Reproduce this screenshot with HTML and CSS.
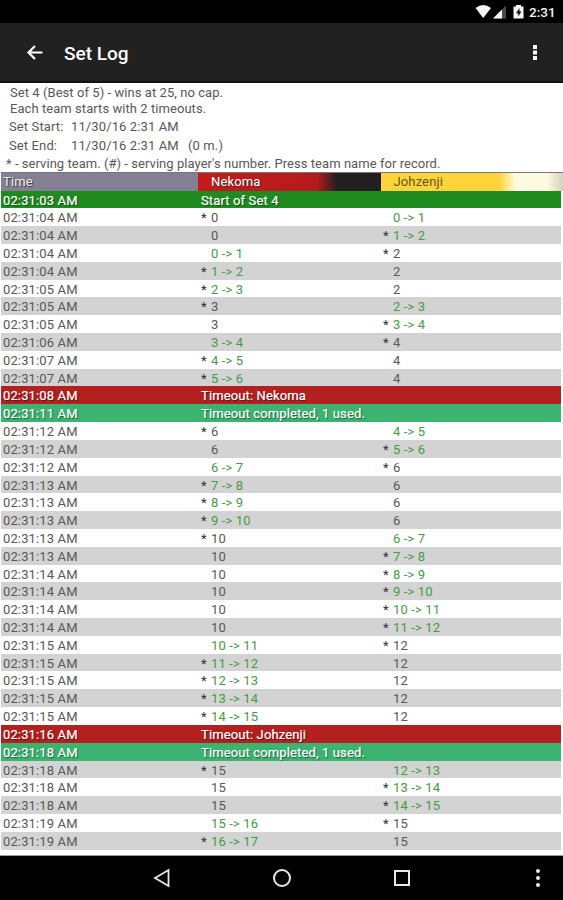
FILE: index.html
```html
<!DOCTYPE html>
<html lang="en">
<head>
<meta charset="utf-8">
<title>Set Log</title>
<link rel="stylesheet" href="styles.css">
</head>
<body>
<div class="status">
  <svg class="signals" width="50" height="18" viewBox="0 0 50 18">
    <path d="M0.5 5Q8.2 -1 16 5L8.200 15Z" fill="#f4f4f4"/>
    <path d="M31 2.500V15.500H18Z" fill="#4b4b4b"/>
    <path d="M27 6.500V15.500H18Z" fill="#f4f4f4"/>
    <path d="M38.500 3.500H41V2H46V3.500H48.500V15.500H38.500Z" fill="#f4f4f4"/>
    <path d="M44.500 5L41 10.200H43.200V13.500L46.500 8.500H44.500Z" fill="#111"/>
  </svg>
  <span class="clock">2:31</span>
</div>
<header class="appbar">
  <svg class="back" width="18" height="18" viewBox="0 0 18 18"><path d="M9 3L2.500 9.500L9 16M3 9.500H16.500" fill="none" stroke="#fff" stroke-width="2.200"/></svg>
  <h1>Set Log</h1>
  <svg class="more" width="6" height="20" viewBox="0 0 6 20"><path d="M1 3h4v4h-4zM1 8.500h4v4h-4zM1 14h4v4h-4z" fill="#fff"/></svg>
</header>
<main>
  <section class="info">
    <p class="summary">Set 4 (Best of 5) - wins at 25, no cap.<br>Each team starts with 2 timeouts.</p>
    <p class="stamp"><span class="label">Set Start:</span><span>11/30/16 2:31 AM</span></p>
    <p class="stamp"><span class="label">Set End:</span><span class="when">11/30/16 2:31 AM</span><span>(0 m.)</span></p>
    <p class="legend">* - serving team. (#) - serving player's number. Press team name for record.</p>
  </section>
  <section class="log">
    <div class="row head"><span>Time</span><span class="team home">Nekoma</span><span class="team away">Johzenji</span></div>
    <div class="row event start"><span>02:31:03 AM</span><b>Start of Set 4</b></div>
    <div class="row"><span>02:31:04 AM</span><i>*</i><span>0</span><i></i><span class="up">0 -&gt; 1</span></div>
    <div class="row"><span>02:31:04 AM</span><i></i><span>0</span><i>*</i><span class="up">1 -&gt; 2</span></div>
    <div class="row"><span>02:31:04 AM</span><i></i><span class="up">0 -&gt; 1</span><i>*</i><span>2</span></div>
    <div class="row"><span>02:31:04 AM</span><i>*</i><span class="up">1 -&gt; 2</span><i></i><span>2</span></div>
    <div class="row"><span>02:31:05 AM</span><i>*</i><span class="up">2 -&gt; 3</span><i></i><span>2</span></div>
    <div class="row"><span>02:31:05 AM</span><i>*</i><span>3</span><i></i><span class="up">2 -&gt; 3</span></div>
    <div class="row"><span>02:31:05 AM</span><i></i><span>3</span><i>*</i><span class="up">3 -&gt; 4</span></div>
    <div class="row"><span>02:31:06 AM</span><i></i><span class="up">3 -&gt; 4</span><i>*</i><span>4</span></div>
    <div class="row"><span>02:31:07 AM</span><i>*</i><span class="up">4 -&gt; 5</span><i></i><span>4</span></div>
    <div class="row"><span>02:31:07 AM</span><i>*</i><span class="up">5 -&gt; 6</span><i></i><span>4</span></div>
    <div class="row event timeout"><span>02:31:08 AM</span><b>Timeout: Nekoma</b></div>
    <div class="row event done"><span>02:31:11 AM</span><b>Timeout completed, 1 used.</b></div>
    <div class="row"><span>02:31:12 AM</span><i>*</i><span>6</span><i></i><span class="up">4 -&gt; 5</span></div>
    <div class="row"><span>02:31:12 AM</span><i></i><span>6</span><i>*</i><span class="up">5 -&gt; 6</span></div>
    <div class="row"><span>02:31:12 AM</span><i></i><span class="up">6 -&gt; 7</span><i>*</i><span>6</span></div>
    <div class="row"><span>02:31:13 AM</span><i>*</i><span class="up">7 -&gt; 8</span><i></i><span>6</span></div>
    <div class="row"><span>02:31:13 AM</span><i>*</i><span class="up">8 -&gt; 9</span><i></i><span>6</span></div>
    <div class="row"><span>02:31:13 AM</span><i>*</i><span class="up">9 -&gt; 10</span><i></i><span>6</span></div>
    <div class="row"><span>02:31:13 AM</span><i>*</i><span>10</span><i></i><span class="up">6 -&gt; 7</span></div>
    <div class="row"><span>02:31:13 AM</span><i></i><span>10</span><i>*</i><span class="up">7 -&gt; 8</span></div>
    <div class="row"><span>02:31:14 AM</span><i></i><span>10</span><i>*</i><span class="up">8 -&gt; 9</span></div>
    <div class="row"><span>02:31:14 AM</span><i></i><span>10</span><i>*</i><span class="up">9 -&gt; 10</span></div>
    <div class="row"><span>02:31:14 AM</span><i></i><span>10</span><i>*</i><span class="up">10 -&gt; 11</span></div>
    <div class="row"><span>02:31:14 AM</span><i></i><span>10</span><i>*</i><span class="up">11 -&gt; 12</span></div>
    <div class="row"><span>02:31:15 AM</span><i></i><span class="up">10 -&gt; 11</span><i>*</i><span>12</span></div>
    <div class="row"><span>02:31:15 AM</span><i>*</i><span class="up">11 -&gt; 12</span><i></i><span>12</span></div>
    <div class="row"><span>02:31:15 AM</span><i>*</i><span class="up">12 -&gt; 13</span><i></i><span>12</span></div>
    <div class="row"><span>02:31:15 AM</span><i>*</i><span class="up">13 -&gt; 14</span><i></i><span>12</span></div>
    <div class="row"><span>02:31:15 AM</span><i>*</i><span class="up">14 -&gt; 15</span><i></i><span>12</span></div>
    <div class="row event timeout"><span>02:31:16 AM</span><b>Timeout: Johzenji</b></div>
    <div class="row event done"><span>02:31:18 AM</span><b>Timeout completed, 1 used.</b></div>
    <div class="row"><span>02:31:18 AM</span><i>*</i><span>15</span><i></i><span class="up">12 -&gt; 13</span></div>
    <div class="row"><span>02:31:18 AM</span><i></i><span>15</span><i>*</i><span class="up">13 -&gt; 14</span></div>
    <div class="row"><span>02:31:18 AM</span><i></i><span>15</span><i>*</i><span class="up">14 -&gt; 15</span></div>
    <div class="row"><span>02:31:19 AM</span><i></i><span class="up">15 -&gt; 16</span><i>*</i><span>15</span></div>
    <div class="row"><span>02:31:19 AM</span><i>*</i><span class="up">16 -&gt; 17</span><i></i><span>15</span></div>
  </section>
</main>
<nav class="navbar">
  <svg width="18" height="20" viewBox="0 0 18 20"><path d="M16.500 2V18L3 10Z" fill="none" stroke="#e8e8e8" stroke-width="1.800"/></svg>
  <svg width="20" height="20" viewBox="0 0 20 20"><circle cx="10" cy="10" r="8" fill="none" stroke="#e8e8e8" stroke-width="2"/></svg>
  <svg width="18" height="20" viewBox="0 0 18 20"><rect x="2" y="3" width="14" height="14" fill="none" stroke="#e8e8e8" stroke-width="2"/></svg>
  <svg width="6" height="20" viewBox="0 0 6 20"><g fill="#e8e8e8"><circle cx="3" cy="3" r="2"/><circle cx="3" cy="10" r="2"/><circle cx="3" cy="17" r="2"/></g></svg>
</nav>
</body>
</html>
```
FILE: styles.css
```css
* { box-sizing: border-box; }
body {
  margin: 0;
  height: 900px;
  display: flex;
  flex-direction: column;
  overflow: hidden;
  background: #fff;
  color: #585858;
  font: 13px/18px Roboto, sans-serif;
}
h1, p { margin: 0; }

.status {
  height: 23px;
  padding: 3px 8px 0 0;
  display: flex;
  justify-content: flex-end;
  background: #000;
}
.signals { margin-right: 4px; }
.clock {
  width: 26px;
  color: #f4f4f4;
  font-size: 13.5px;
  font-weight: 500;
  line-height: 18px;
}
.appbar {
  height: 60px;
  padding: 0 25px 0 26px;
  display: flex;
  align-items: center;
  background: #212121;
  border-bottom: 2px solid #111;
}
.appbar h1 {
  margin-left: 20px;
  padding-top: 3px;
  flex: 1;
  color: #fff;
  font-size: 19px;
  font-weight: 500;
  line-height: 24px;
}

main { height: 773px; border-bottom: 1px solid #999; }
.info { height: 89px; padding-left: 9px; }
.summary {
  padding: 2px 0 0 1px;
  line-height: 15.500px;
  letter-spacing: .06px;
}
.stamp { display: flex; height: 18.500px; line-height: 22px; letter-spacing: .12px; }
.label { width: 62px; }
.when { width: 117px; }
.legend { margin-left: -3px; padding-top: 1px; line-height: 20px; letter-spacing: .045px; white-space: nowrap; }

.log { padding: 0 2px 0 1px; }
.row {
  height: 17.820px;
  padding-left: 2px;
  display: grid;
  grid-template-columns: 198px 10px 172px 10px 1fr;
  line-height: 19.400px;
  letter-spacing: .13px;
}
.row i { font-style: normal; color: #333; }
.row:nth-child(even) { background: #d3d3d3; }
.row .up { color: #469b46; }
.row.head {
  height: 18.500px;
  margin-right: -2px;
  grid-template-columns: 195px 182.500px 1fr;
  background: #857f94;
  border-top: 1px solid #777;
  color: #eee;
  line-height: 18px;
  text-shadow: 1px 1px 1px #333;
}
.team { padding-left: 13px; }
.home { background: linear-gradient(90deg, #c21c1e 0, #b51b1d 65%, #231f20 76%); color: #fff; }
.away { background: linear-gradient(90deg, #ffd43a 0, #ffd43a 65%, #fffbe0 74%, #fffbe0 91%, #d5d1bc 100%); color: #665420; text-shadow: none; }
.row.event {
  grid-template-columns: 198px 1fr;
  color: #fff;
  text-shadow: 1px 1px 1px rgba(0, 0, 0, .5);
}
.event b { font-weight: 400; -webkit-text-stroke: .2px #fff; }
.event span { -webkit-text-stroke: .2px #fff; }
.row.start { background: #1f8b1f; }
.row.timeout { background: #b22020; }
.row.done { background: #3cb371; }

.navbar {
  height: 44px;
  padding: 0 22px 0 152px;
  display: grid;
  grid-template-columns: 120px 121px 1fr auto;
  align-items: center;
  background: #000;
}
```
